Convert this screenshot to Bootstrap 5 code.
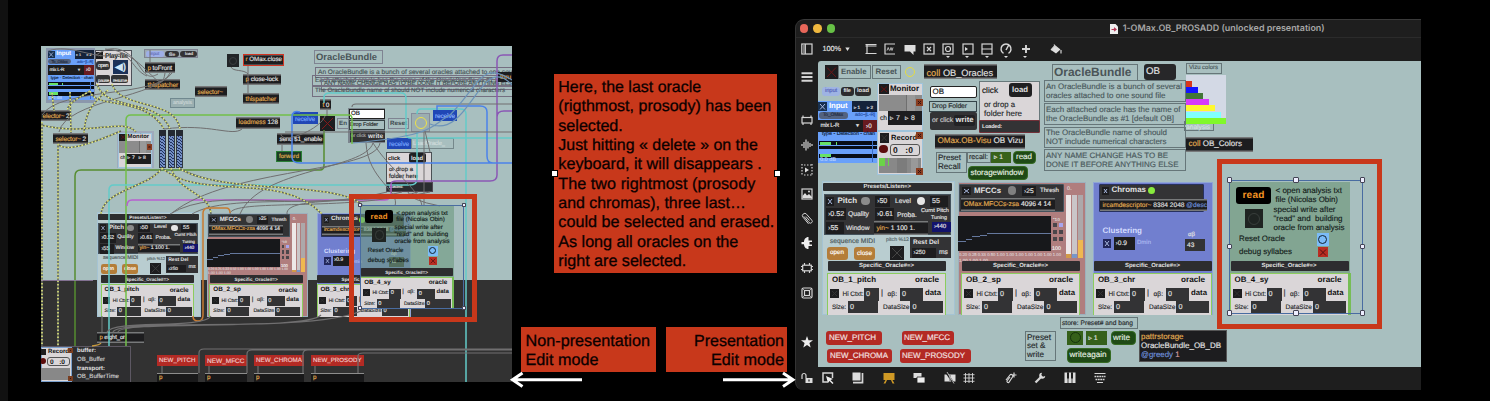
<!DOCTYPE html>
<html lang="en">
<head>
<meta charset="utf-8">
<title>OMax OracleBundle – edit modes</title>
<link href="https://cdn.jsdelivr.net/npm/bootstrap@5.3.0/dist/css/bootstrap.min.css" rel="stylesheet">
<script src="https://cdn.jsdelivr.net/npm/bootstrap@5.3.0/dist/js/bootstrap.bundle.min.js"></script>
<style>
:root{--brick:#c8381b;--patch:#a8bfbf;--chrome:#1e1e1e}
body{background:#000;width:1490px;height:401px;font-family:"Liberation Sans",Arial,sans-serif;line-height:1;text-rendering:geometricPrecision}
.edge{width:8px;height:401px;background:#111}
.patch{position:relative;overflow:hidden;background:var(--patch)}
.patch i{position:absolute;display:block;font-style:normal;box-sizing:border-box}
.patch span{position:absolute;white-space:pre;transform:translateY(-44%);line-height:1.1}
.patch svg{position:absolute;left:0;top:0;overflow:visible}
.patch-left{width:471px;height:336px;margin:46px 0 0 33px;background:linear-gradient(var(--patch) 234.5px,#323232 234.5px)}
.notes{width:283px;height:401px}
.note-main{width:223px;height:199px;background:var(--brick);margin:74px 0 0 42px;padding:4px 0 0 4.3px;position:relative}
.note-line{display:block;white-space:pre;font-size:16.2px;line-height:19.35px;height:19.35px;color:#0b0000;-webkit-text-stroke:.3px #0b0000}
.note-line b{font-weight:400;display:inline-block}
.grip{position:absolute;top:96px;width:7px;height:7px;background:#fff;border:1px solid #000}
.grip.l{left:-3px}.grip.r{right:-4px}
.mode{height:45px;background:var(--brick);padding:4.5px 3px 0 4.5px}
.win{width:626px;height:371px;margin-top:19px;background:var(--chrome);border-top:1.5px solid #3a3a3a;border-left:1px solid #333;border-radius:9px 0 0 8px;overflow:hidden}
.titlebar{height:18px;border-bottom:1px solid #2b2b2b;position:relative}
.dotc{width:8.4px;height:8.4px;border-radius:50%}
.title{color:#a8a8a8;font:600 9.3px Inter,sans-serif;white-space:pre}
.tools{height:22.5px}
.tools svg,.side svg,.foot svg{display:block;flex:none;overflow:visible;fill:none;stroke:#d5d5d5;stroke-width:1.2}
.cell{width:19.3px;display:flex;justify-content:center;position:relative}
.cell.m::after{content:"";position:absolute;top:13px;left:7.4px;border:2.3px solid transparent;border-top:2.8px solid #ddd}
.zoomval{color:#ddd;font-size:8px;margin-left:10px;width:19px;-webkit-text-stroke:.2px #ddd}
.side{width:22px;height:306px;padding-top:4px}
.side div{height:24.6px;display:flex;align-items:center;justify-content:center}
.side .gap-s{height:19px}
.foot{height:23px}
.patch-right{width:603px;height:306px;border-radius:3px 0 0 0}
.frame{position:absolute;border:5px solid var(--brick);pointer-events:none}
.frame-l{left:349px;top:194px;width:128px;height:128px}
.frame-r{left:1217px;top:159px;width:165px;height:170px}
.arrows{position:absolute;left:505px;top:370px}
.modes{margin:54px 0 0 9px;gap:10px}
.mode-a{width:135px}.mode-b{width:121px}
</style>
</head>
<body class="d-flex overflow-hidden position-relative m-0">
<div class="edge flex-shrink-0"></div>
<section id="left" class="patch patch-left flex-shrink-0"></section>

<section class="notes flex-shrink-0 d-flex flex-column">
  <div class="note-main">
    <div class="note-line"><b data-w="142.8">Here, the last oracle</b></div>
    <div class="note-line"><b data-w="213">(rigthmost, prosody) has been</b></div>
    <div class="note-line"><b data-w="64.5">selected.</b></div>
    <div class="note-line"><b data-w="199.5">Just hitting « delete » on the</b></div>
    <div class="note-line"><b data-w="203.5">keyboard, it will disappears .</b></div>
    <div class="note-line"><b data-w="197">The two rightmost (prosody</b></div>
    <div class="note-line"><b data-w="187.5">and chromas), three last…</b></div>
    <div class="note-line"><b data-w="216">could be selected and erased.</b></div>
    <div class="note-line"><b data-w="180">As long all oracles on the</b></div>
    <div class="note-line"><b data-w="128">right are selected.</b></div>
    <div class="grip l"></div><div class="grip r"></div>
  </div>
  <div class="modes d-flex">
    <div class="mode mode-a"><div class="note-line"><b data-w="124.5">Non-presentation</b></div><div class="note-line"><b data-w="73">Edit mode</b></div></div>
    <div class="mode mode-b text-end"><div class="note-line"><b data-w="90">Presentation</b></div><div class="note-line"><b data-w="73">Edit mode</b></div></div>
  </div>
</section>

<section class="win flex-shrink-0">
  <header class="titlebar d-flex align-items-center">
    <div class="d-flex ps-1" style="gap:5px"><div class="dotc" style="background:#e8675a"></div><div class="dotc" style="background:#efb83f"></div><div class="dotc" style="background:#67c146"></div></div>
    <div class="d-flex align-items-center" style="margin-left:275px;gap:4.5px">
      <svg width="8" height="10"><path d="M0 0h5.5l2.5 2.5V10H0z" fill="#eee"/><path d="M1.500 5.500h4.500M4 3.800l2 1.700-2 1.600" stroke="#b33553" stroke-width="1.200" fill="none"/></svg>
      <span class="title"><b class="fw-semibold d-inline-block" data-w="202">1-OMax.OB_PROSADD (unlocked presentation)</b></span>
    </div>
  </header>
  <div class="tools d-flex align-items-center">
    <svg width="12" height="12" style="margin-left:4.5px"><rect x=".8" y="1" width="10.2" height="10" /><path d="M4.3 1v10M2 3h1.5M2 5h1.5M2 7h1.5M2 9h1.5"/></svg>
    <span class="zoomval"><b class="fw-normal d-inline-block" data-w="18.5">100%</b></span>
    <svg width="5" height="4" style="margin-left:3px"><path d="M.3.5h4.4L2.5 4z" fill="#ddd" stroke="none"/></svg>
    <div class="d-flex align-items-center" style="margin-left:12px">
      <div class="cell"><svg width="12" height="12"><path d="M.5 1.5h11M.5 10.5h11M2 1.5v9M.5 3h11"/></svg></div>
      <div class="cell"><svg width="12" height="12"><path d="M11 1H1v10h10"/><path d="M3 7.5l1.2-3 1.2 3M6 7.5l1-3 1 3 1-3" stroke-width=".8"/></svg></div>
      <div class="cell"><svg width="12" height="12"><path d="M.5 2h11v6.500H9.500V12L6 8.500H.5z" fill="#ddd" stroke="none"/></svg></div>
      <div class="cell"><svg width="12" height="12"><rect x="1" y="1" width="10" height="10"/><path d="M4 4l4 4M8 4l-4 4"/></svg></div>
      <div class="cell m"><svg width="12" height="12"><rect x="1" y="1" width="10" height="10"/><circle cx="6" cy="6" r="2.500"/></svg></div>
      <div class="cell m"><svg width="12" height="12"><rect x="1" y="1" width="10" height="10"/><path d="M3 4l3 2-3 2z" fill="#ddd" stroke="none"/></svg></div>
      <div class="cell m"><svg width="12" height="12"><rect x="1" y="1" width="10" height="10"/><path d="M1 6h10"/></svg></div>
      <div class="cell m"><svg width="12" height="12"><path d="M3.500 10.300A5 5 0 1 1 8.500 10.300M6 7l2.500-4.500" stroke-width="1.500"/></svg></div>
      <div class="cell m"><svg width="12" height="12"><path d="M6 2v8M2 6h8" stroke-width="1.900"/></svg></div>
      <div class="cell" style="margin-left:11px"><svg width="12" height="12"><path d="M5.500 2.500L10.500 6.500 6 10.500 1 7z" fill="#ddd" stroke="none"/><path d="M6.500 5L4 1.500M1 7l4-4.500"/><path d="M11 7v3.500"/></svg></div>
    </div>
  </div>
  <div class="d-flex">
    <nav class="side">
      <div><svg width="12" height="12"><path d="M.5 2.200h11M.5 6h11M.5 9.800h11" stroke-width="1.900"/></svg></div>
      <div class="gap-s"></div>
      <div><svg width="12" height="12"><rect x="1" y="3.500" width="10" height="5.500"/><path d="M2 1.500v2M10 1.500v2M2 9v2M10 9v2"/></svg></div>
      <div><svg width="12" height="12"><path d="M1 5v2M3 3v6M5 .5v11M7 2.500v7M9 4v4M11 5v2"/></svg></div>
      <div><svg width="12" height="12"><path d="M1 0v12M11 0v12" stroke-dasharray="1.500 1.500"/><path d="M3 1h8M3 11h8" stroke-dasharray="1.500 1.500"/><path d="M4 3.500L8 6l-4 2.500z" fill="#ddd" stroke="none"/></svg></div>
      <div><svg width="12" height="12"><rect x="1" y="1" width="10" height="10"/><path d="M1.500 10V8l2.500-3 2 2.500L8 6l3 3v1z" fill="#ddd" stroke="none"/><circle cx="8" cy="3.500" r="1" fill="#ddd" stroke="none"/></svg></div>
      <div><svg width="12" height="12"><path d="M3 3.500l5 6a1.800 1.800 0 0 0 2.800-2.300L5.500 1.200A2.300 2.300 0 0 0 2 4.200l5.500 6.600M5 3.500l3.500 4" stroke-width="1"/></svg></div>
      <div><svg width="12" height="12"><path d="M7.500 0v3.500H11v1.500H8.500v2.500H11V9H7.500v3C4.500 12 3 9.500 3 7.200H.5V5H3C3 2.500 4.500 0 7.500 0z" fill="#eee" stroke="none"/></svg></div>
      <div><svg width="12" height="12"><rect x="1.700" y="3.200" width="8.600" height="5.600"/><path d="M3.500 1v2M8.500 1v2M3.500 9v2M8.500 9v2M0 4.500h2M0 7.500h2M10 4.500h2M10 7.500h2"/></svg></div>
      <div><svg width="12" height="12"><rect x="1" y="1" width="10" height="10" rx="1.500"/><rect x="3.500" y="3.500" width="5" height="5"/><path d="M1 1l2.500 2.500M11 1L8.500 3.500M1 11l2.500-2.500M11 11L8.500 8.500" stroke-width=".7"/></svg></div>
      <div></div>
      <div><svg width="12" height="12"><path d="M6 0l1.500 4.200H12L8.400 7l1.300 4.500L6 8.900l-3.700 2.600L3.600 7 0 4.200h4.500z" fill="#eee" stroke="none"/></svg></div>
    </nav>
    <div id="right" class="patch patch-right"></div>
  </div>
  <footer class="foot d-flex align-items-center">
    <svg width="12" height="12" style="margin-left:4.500px"><path d="M1 7V3.500a2 2 0 0 1 4 0V6"/><rect x="4.500" y="6" width="7" height="5" fill="#ddd" stroke="none"/><path d="M8 7.500v2" stroke="#1e1e1e"/></svg>
    <svg width="12" height="12" style="margin-left:9px"><path d="M6 10H1V1h9.500v5" stroke-width="1.500"/><path d="M4 4l7 3-2.500 1 3 3-1 1-3-3L6 11z" fill="#eee" stroke="none"/></svg>
    <svg width="12" height="12" style="margin-left:18px"><path d="M.5.5h8v8h-8z" fill="#ddd" stroke="none"/><path d="M10.500 1v9.700H1" stroke-width="1.700"/></svg>
    <svg width="12" height="12" style="margin-left:19px"><path d="M.5 1h11v7h-2l2 3.500H9.500L8 8H4l-1.500 3.500h-2L2.500 8h-2z" fill="#cf9925" stroke="none"/></svg>
    <svg width="12" height="12" style="margin-left:18.500px"><path d="M.5 1h8v5h-8z" fill="#ddd" stroke="none"/><path d="M4 5h8v6H4z" fill="#eee" stroke="#1e1e1e" stroke-width=".8"/></svg>
    <svg width="12" height="12" style="margin-left:18.500px"><path d="M.5 2.500h5v7h-5zM6.500 2.500h5v7h-5z" fill="#ddd" stroke="none"/><path d="M2 0l8 12" stroke="#1e1e1e" stroke-width="2"/><path d="M3 0l7 11.500M6 2v8" stroke-width=".8"/></svg>
    <svg width="12" height="12" style="margin-left:7.500px"><path d="M2.500 1v10M6 1v10M9.500 1v10M.5 2.700h11M.5 6h11M.5 9.300h11" stroke-width=".9"/></svg>
    <svg width="12" height="12" style="margin-left:29.500px"><path d="M1 8l4-5a1.500 1.500 0 0 1 2.500 2L3.800 10.500A1.300 1.300 0 0 1 2 9l3-4M9 .5v5M6.500 3h5"/></svg>
    <svg width="12" height="12" style="margin-left:17px"><path d="M1.500 10.500l5-5" stroke-width="2.300"/><path d="M8 .8A3 3 0 1 0 11.200 4L9 4.700 7.300 3z" fill="#ddd" stroke="none"/></svg>
    <svg width="12" height="12" style="margin-left:18px"><path d="M.5.5h11v10.500H.5z" fill="#ddd" stroke="none"/><path d="M4 0v11M8 0v11" stroke="#1e1e1e" stroke-width=".8"/><path d="M4 .5v6M8 .5v6" stroke="#1e1e1e" stroke-width="2"/></svg>
    <svg width="12" height="12" style="margin-left:18.500px"><path d="M.5 1.500h11M3 10.500h6"/><path d="M.5 4.500h11M1.500 7.500h9" stroke-width="1.700" stroke-dasharray="1.800 .6"/></svg>
  </footer>
</section>

<div class="frame frame-l"></div>
<div class="frame frame-r"></div>
<svg class="arrows" width="300" height="22" fill="none" stroke="#fff" stroke-width="3"><path d="M8 9.700h69M17.500 3L7.500 9.700l10 6.800M218 9.700h70M278 3l10 6.700-10 6.800"/></svg>

<script>
const D='#1d1d1f', G='#333335', P='#dad6d8', O='#e3ad52', W='#e2e2e2', K='#26292b';
// Fits a label to a width: shrink the type first, then adjust the tracking.
function fit(el,w){const n=el.textContent.length;let m=el.getBoundingClientRect().width;
  const f=parseFloat(getComputedStyle(el).fontSize),s=Math.max(.92,Math.min(1.06,w/m));
  if(Math.abs(s-1)>.005){el.style.fontSize=f*s+'px';m=el.getBoundingClientRect().width}
  el.style.letterSpacing=((w-m)/n)+'px'}

// A patcher draws boxes, labels and cables in its own coordinate space.
function patcher(id,x0,y0){
  const root=document.getElementById(id);let k=1,tx=0,ty=0;
  const px=v=>v+'px';
  const p={
    at(s,fx,fy,gx,gy){k=s;tx=gx-s*fx;ty=gy-s*fy},
    // box given by its left, top, right, bottom
    b(x,y,r,q,bg,bd,rad){const e=document.createElement('i');Object.assign(e.style,{left:px(k*x+tx-x0),top:px(k*y+ty-y0),width:px(k*(r-x)),height:px(k*(q-y)),background:bg||'transparent',border:bd||'',borderRadius:px(k*(rad||0))});root.append(e);return e},
    // label from x to r, centred on y
    t(x,r,y,s,str,c,bold){const e=document.createElement('span');if(Array.isArray(str))str.forEach(([a,col])=>{const q=document.createElement('em');q.style.fontStyle='normal';q.style.color=col;q.textContent=a;e.append(q)});else e.textContent=str;
      Object.assign(e.style,{left:px(k*x+tx-x0),top:px(k*y+ty-y0),fontSize:px(k*s),color:c||K,fontWeight:bold?700:400,webkitTextStroke:bold?'':'.15px'});root.append(e);fit(e,k*(r-x));return e},
    c(x,y,r,bg,bd){p.b(x-r,y-r,x+r,y+r,bg,bd,r)},
    x(x,y,r,q,bg,col){const s=document.createElementNS('http://www.w3.org/2000/svg','svg');p.b(x,y,r,q,bg||D);s.innerHTML=`<path d="M${k*x+tx-x0+2*k} ${k*y+ty-y0+2*k}L${k*r+tx-x0-2*k} ${k*q+ty-y0-2*k}M${k*r+tx-x0-2*k} ${k*y+ty-y0+2*k}L${k*x+tx-x0+2*k} ${k*q+ty-y0-2*k}" stroke="${col||'#a9b9e0'}" stroke-width="${k}"/>`;root.append(s)},
    w(list){const s=document.createElementNS('http://www.w3.org/2000/svg','svg');s.innerHTML=`<g transform="translate(${-x0} ${-y0})" fill="none">`+list.map(([c,sw,d,da])=>`<path d="${d}" stroke="${c}" stroke-width="${sw}"${da?` stroke-dasharray="${da}"`:''}/>`).join('')+'</g>';root.append(s)},
    obj(x,y,r,q,tr,s,str){p.b(x,y,r,q,D,'').style.boxShadow='inset 0 1.5px #77797a, inset 0 -1.5px #77797a';p.t(x+2.5,tr,(y+q)/2,s,str,W)},
    num(x,y,r,q,str,s,bg,c){p.b(x,y,r,q,bg||D);p.t(x+2,Math.min(r-1,x+2+[...str].reduce((a,ch)=>a+(ch==='›'?.36:ch==='.'?.28:.56),0)*(s||7)),(y+q)/2,s||7,str,c||W)},
    foot(dx,name,nr){const X=v=>v+dx;
      p.b(X(828),261.5,X(946),271.500,'#2d2d2f','',1);p.t(X(859),X(914),266.500,6,'Specific_Oracle#=>',W,1);
      const e=p.b(X(827),273,X(946),315,P,'1px solid #8ccc5e');e.style.borderBottom='0';
      p.t(X(832),X(nr),280.500,8.600,name,'#111',1);p.t(X(915),X(939),280.500,8.300,'oracle','#111',1);
      p.x(X(830),289,X(839),298,D,'#333');p.t(X(842.5),X(863.5),294,7,'Hi Ctxt:');p.b(X(864),288,X(879),301,G);p.t(X(866),X(870),294,7,'0',W);
      p.t(X(881),X(883),293,7.500,'|');p.t(X(887.5),X(897),294,7,'αβ:');p.b(X(900),288,X(923),301,G);p.t(X(902),X(906),294.500,7,'0',W);p.t(X(925),X(941),293,8.300,'data','#111',1);
      p.t(X(832),X(846),307.500,7,'Size:');p.b(X(848),301.500,X(878),313.500,G);p.t(X(850),X(854),307.500,7,'0',W);p.t(X(883),X(909.5),307.500,7,'DataSize');p.b(X(910),301.500,X(943),313.500,G);p.t(X(912.5),X(916.5),307.500,7,'0',W)},
    pitch(){p.b(822,181,955,315,'#b9cdd0','1px solid #a5c3d3');p.b(823,183,952,191.500,'#2d2d2f','',1);p.t(863.5,911,187.500,6.200,'Presets/Listen=>',W,1);
      p.b(824,194.500,951,235,G,'1px solid #44525c');p.x(826,197,834,206,D);p.t(837.5,857,201.500,8.500,'Pitch',W,1);p.c(865.5,201.500,4.300,'#8b8b8b');
      p.num(875,196,890,207,'›50',7);p.t(895,911,201.500,7.200,'Level',W);p.c(921,201.500,4.300,'#e6e6e6');p.num(930,196,948,207,'55',7);
      p.num(826,208,846,220,'›0.52',7);p.t(848,869,214.500,7.200,'Quality',W);p.num(875,208,894,220,'›0.61',7);p.t(897,917,215,7.200,'Proba.',W);p.t(921,949,211,5.300,'Curnt Pitch',W);p.t(931,947,219,5.500,'Tuning',W);
      p.num(826,222,844,234,'›55',7);p.t(846,869.5,228,7.200,'Window',W);p.obj(874,221.500,928,235,915,7.200,[['yin~ ',O],['1 100 1.',W]]);p.num(932,222,951,232.500,'›440',6,'#12136c');
      p.t(830,875,241,6.800,'sequence MIDI','#4a5557');p.t(886,909,241,5.500,'pitch %12','#56666a');p.b(910,237,951,258.500,G);p.t(913,939,242.500,6.800,'Rest Del',W,1);p.num(911.5,248,936,258,'›250',5.800);p.t(939,948,252,6.500,'ms',W);
      p.b(827,247,847.5,260,'#b47d39','',3);p.t(830,844,253.500,6.500,'open','#fff');p.b(854,247,875,260,'#b47d39','',3);p.t(857,872,253.500,6.500,'close','#fff');p.x(890,246,904,260,D,'#444');p.foot(0,'OB_1_pitch',876)},
    mfcc(){p.b(957.5,182,1086,315,'#b07e7e','1px solid #9db0bd');p.b(959,184,1064,212.500,G,'1px solid #44525c',1);p.x(962,187,971,195,D);p.t(974,1001,191.500,8.300,'MFCCs',W,1);p.c(1012,191,4.300,'#808080');p.num(1022,186,1036,196.500,'›25',6.500);p.t(1040,1059,191.500,6.300,'Thresh',W);
      p.obj(961,198,1055,211,1051,7,[['OMax.MFCCs-zsa ',O],['4096 4 14',W]]);p.b(958,216,1051,251.500,'#17181b');
      [[958,966,241],[966,972,239],[972,980,236.500],[980,987,235],[987,1051,233.500]].forEach(a=>p.b(a[0],a[2],a[1],a[2]+.8,'#65789e'));
      p.t(959,1061,255,4.400,'0.20 0.25 0.33 0.50 1.00 1.00 1.00 1.00 1.00 1.00 1.00','#dacbcc');p.t(959,988,260,4.400,'1.00 1.00 1.00','#dacbcc');
      for(let i=0;i<3;i++){p.b(1053,223+i*7,1056.5,227+i*7,'#4b464a');p.b(1058.5,223+i*7,1062.5,227+i*7,i?'#4b464a':'#a9a5ee')}
      p.t(1053,1060,220,4,'"10','#ddd');p.t(1052,1061,250,5,'100','#eee');p.t(1067,1072,190,5,'0.','#ddd');
      p.b(1066,195,1071,258,'#eee8e8');p.b(1072,195,1077,258,'#cac6c8');p.b(1078,195,1083,258,'#ada8aa');p.b(1078,240,1083,258,'#efb850');p.b(1066,254.500,1071,258,'#d29a48');p.b(1072,254.500,1077,258,'#7896c9');p.foot(134,'OB_2_sp',867)},
    chroma(){p.b(1093,182.500,1213,315,'#717fcf','1px solid #8fa5d6');p.b(1099,184,1204,212.500,G,'1px solid #27315f',1);p.x(1102,187,1109,195,D);p.t(1111.5,1146,190.500,8,'Chromas',W,1);p.c(1151.5,191,3.800,'#87ea3d');
      p.obj(1100,199,1207,211,1207,6.800,[['ircamdescriptor~ ',O],['8384 2048 ',W],['@desc','#6f91dd']]);p.t(1102.5,1142,231.500,8,'Clustering','#d5dcff',1);p.x(1103,239,1111,248,'#22275a');p.num(1113.5,237,1135,250,'›0.9',6.500);p.t(1137,1151,243.500,6.500,'Dmin','#acb9f0');p.t(1188,1195,235,6.500,'αβ',W);p.num(1185,239,1205,251,'43',6.500,G);p.foot(266,'OB_3_chr',869)},
    prosody(alpha){p.b(1230,182,1350,315,alpha?'rgba(108,153,126,.6)':'#82a592','');p.b(1236,187,1271,204,'#000','',3);p.t(1242.5,1264.5,195.500,9.500,'read','#f29323',1);
      [['< open analysis txt',1275.5,1342,191.500],['file (Nicolas Obin)',1275.5,1338,200],['special write after',1273.5,1335.5,210],['"read" and  building',1273.5,1342.5,219],['oracle from analysis',1273.5,1344.5,228]].forEach(a=>p.t(a[1],a[2],a[3],7.700,a[0],'#14201a'));
      p.b(1244.5,209.500,1263,228.500,'#1f2422');p.c(1254,219,6,'','1px solid #383e3b');p.t(1239,1285,239.500,7.700,'Reset Oracle','#14201a');p.t(1239,1292,252.500,7.700,'debug syllabes','#14201a');
      p.b(1316.5,233,1329,246,'#7bbcf8');p.c(1322.8,239.500,4.500,'','1px solid #123');p.x(1318,247.500,1328,257.500,'#b92d22','#511');p.foot(402.5,'OB_4_sy',866);p.b(1348,273,1350.500,315,'#76bd55');
      p.b(1229,180.500,1363,314,'','1.3px solid #496ca1');[1229.5,1296,1362.5].forEach(x=>[180.500,247,313.500].forEach(y=>{if((x!==1296||y!==247)&&!(alpha&&(x===1296||y===247)))p.b(x-2.700,y-2.700,x+2.700,y+2.700,'#eef','1px solid #445',1)}))}
  };return p}

const bdr='1px solid #667679';
document.querySelectorAll('[data-w]').forEach(e=>fit(e,+e.dataset.w));

// presentation view
const r=patcher('right',818,61);
function monitor(p){p.b(877,83,923,131,P,'1px solid #9fc4dc');p.x(879,84.500,889,94,D,'#611');p.t(890,919,89.500,8.300,'Monitor','#111',1);p.b(879,95,922,111,'#8c8c8c');p.b(907,95,915,111,'#999');p.b(906,95,907,111,'#6f6f6f');p.x(916,99,923,106,'#8a3d20','#311');p.t(880,887,118,7.300,'ch');p.b(887.5,111.500,921.5,125,D);p.t(890,900,118,6.500,'▹ 7',W);p.t(905,915,118,6.500,'▹ 8',W)}
function record(p){p.b(877,131.500,923,175,P,'1px solid #9fc4dc');p.x(879.5,133,889,143,D,'#333');p.t(891,917,138,8.200,'Record','#111',1);p.c(883.5,149.500,4.300,'#5c0d0d');p.b(889.5,144,920,156,P,'1px solid #555',3);p.t(893,913,150,8,'0   :0','#111',1);p.b(879,158,921,173,'#888');p.b(897,158,907,173,'#7c7c7c');p.b(911,158,918,173,'#999');p.b(879,158,885,166,'#6bd348');p.b(888,158,889,166,'#6bd348');p.x(916,132,923,139,'#8a3d20','#311');p.x(916,168,923,175,'#8a3d20','#311')}
function input(p){p.b(818,101,876.5,163,'#69a0fa');p.x(818,102,827,111.500,'#17304f');p.t(829,847.5,106.500,8.500,'Input','#fff',1);p.b(852,101.500,876.500,112,'#15233a');p.t(854,860,107,5,'▹ 1',W);p.t(867,873,107,5,'▹ 2',W);p.b(818.5,112.500,848,119,'#53627f','',3);p.t(823,843,115.700,5.300,'To_OMax','#1d293f');p.t(855,875,115.500,5.300,'adc~[L-R]','#22499e');p.b(818,120,863,132,D);p.t(820.5,839,126.500,6.500,'mix L-R',W);p.t(855,860,126,5,'▼',W);p.b(863,120,876.500,132,'#681b20');p.t(866,872,126,6,'›0',W);p.t(822,875,135.500,5.700,'type - Detection - chan','#0b1b38');p.b(818.5,141,876.500,149.500,'#080e18');p.b(818.5,145,876.500,146,'#69a0fa');p.b(819.5,142,831,145,'#67e265');p.b(835.5,142,836.500,145,'#67e265');p.b(818.5,154,876.500,158,'#080e18');p.b(819.5,154,831,157.500,'#67e265');p.b(871.5,141,872.5,162,'#3d6fc4');p.t(820,836,160.500,5.500,'0.0 dB','#b7d1ff')}
r.x(825,65.500,838,79,D,'#6d1717');r.b(838,65.500,870.5,79,'',bdr);r.t(841,866.5,72.300,8.400,'Enable','#4a5659',1);r.b(872,65.500,900.5,79,'',bdr);r.t(875.5,897,72.300,8.400,'Reset','#4a5659',1);r.c(909.5,72,5,'','1.5px solid #e6dc3f');
r.obj(924,64.500,997,79.500,993,9.100,[['coll ',O],['OB_Oracles',W]]);
r.b(822,87,840,96,'#9eb3e3','',3);r.t(825,837,91.500,6.300,'input','#5562ba');r.b(841,87,853.500,96,'#2c2c2e','',3);r.t(843.5,850.500,91.500,6,'file',W,1);r.b(855,87,871,96,'#2c2c2e','',3);r.t(857,869,91.500,6,'load',W,1);
input(r);monitor(r);record(r);
r.b(930,86.500,977,98.500,'#fff','1px solid #222',2);r.t(932.5,944,92.800,8.300,'OB','#111');r.b(929,101,977,112,'#a8bfbf','1px solid #354449');r.t(932,967,106.800,7.300,'Drop Folder');r.b(930,112,976.500,130,G,'',2);r.t(932,953,120.500,7,'or click','#ccc');r.b(954,115,975,126,'#222224','',2);r.t(955.5,973.500,120.500,7.800,'write',W,1);
r.b(979,81,1039.5,121,P,'1px solid #68787b');r.t(982,998,90,8,'click','#111');r.b(1009,83,1032,97.500,'#202022','',3);r.t(1012,1028,90.500,8,'load',W,1);r.t(984,1015,105,8,'or drop a');r.t(984,1022,114,8,'folder here');r.b(979,120.500,1040,133,G,'1px solid #713038',1);r.t(982,1002,127,6,'Loaded:',W,1);
r.obj(935,134,1025,149,1023,8.100,[['OMax.OB-Visu ',O],['OB Vizu',W]]);
r.b(935.5,152,967,173.500,'',bdr);r.t(938,961,158.500,8,'Preset');r.t(938,960.5,167.500,8,'Recall');r.b(967,152,991,163.500,'',bdr);r.t(969,988,157.800,7,'recall:');r.b(991,152,1010.5,163.500,'#38621a');r.t(994,1003,157.800,7,'▹ 1',W);
const gb=(x,y,q,z,s,a,c)=>{r.b(x,y,q,z,'#1f4a16','1px solid #356b22',4);r.t(a,c,(y+z)/2,8.100,s,'#e4efe0')};
gb(1013,151,1035.5,164.500,'read',1016,1032);gb(968,166,1028,180,'storagewindow',970.5,1023.5);
r.b(1051.5,64,1138,81.500,'',bdr);r.t(1054,1131.500,72.700,12.100,'OracleBundle','#4b5558',1);r.b(1143.5,64,1176,80,'#272729','',3);r.t(1146,1160,72,9.200,'OB',W);
r.b(1184,121,1213.5,131.500,'',bdr);r.t(1186,1210,127,7,'analysis','#d6e1e1');r.b(1186,75.500,1226,124,'#d3d9e5');
[[80.500,102,'An OracleBundle is a bunch of several',1182,'oracles attached to one sound file',1165.5],[103.500,125.500,'Each attached oracle has the name of',1180.5,'the OracleBundle as #1 [default OB]',1174],[127,148.500,'The OracleBundle name of should',1167,'NOT include numerical characters',1166.5],[149.500,171.500,'ANY NAME CHANGE HAS TO BE',1168,'DONE IT BEFORE ANYTHING ELSE',1178.5]].forEach(a=>{r.b(1043.5,a[0],1185.5,a[1],'',bdr);r.t(1046,a[3],a[0]+6.500,8.300,a[2],'#49585b');r.t(1046,a[5],a[0]+15.500,8.300,a[4],'#49585b')});
r.b(1186,63,1221.5,74,'',bdr);r.t(1189,1218,68.500,6.400,'Vizu colors','#49585b');
['#d9371c','#1414ff','#427636','#d63bfb','#fff82f','#80ffff','#80f82a'].forEach((c,i)=>r.b(1186,81.500+i*6.100,1192+i*5.700,87.600+i*6.100,c));
r.obj(1186,137.500,1253,152,1242,7.800,[['coll ',O],['OB_Colors',W]]);
r.pitch();r.mfcc();r.chroma();r.prosody();
[[826,331,881.5,'NEW_PITCH',829,876],[901.5,331,953.5,'NEW_MFCC',904,950],[827,349,891.5,'NEW_CHROMA',830,888],[899.5,349,971,'NEW_PROSODY',902,965]].forEach(a=>{r.b(a[0],a[1],a[2],a[1]+14.500,'#b32a24','',3);r.t(a[4],a[5],a[1]+7.300,8.400,a[3],'#f3e3e3')});
r.b(1025,331,1055.5,361.500,'',bdr);r.t(1027,1051,337.500,8.200,'Preset');r.t(1027,1045.500,346.500,8.200,'set &');r.t(1027,1044,355.500,8.200,'write');
r.b(1059.5,317.500,1137.5,329,'',bdr);r.t(1062,1133,323.500,7,'store: Preset# and bang');
r.b(1067,331,1083,345.500,'#35601a');r.c(1075.3,338.300,5.500,'','1.3px solid #15330d');r.b(1086,331,1106.5,345.500,'#35601a');r.t(1088.5,1097.5,338,7.500,'▹ 1',W);gb(1110.5,331,1136,345,'write',1113,1130);gb(1067,348.500,1110.5,363,'writeagain',1069.5,1106.500);
r.b(1138.5,330.500,1226.5,362.500,D,'1px solid #555');r.t(1141,1183.500,337.500,8.300,'pattrstorage',O);r.t(1141,1221,346.500,8.300,'OracleBundle_OB_DB',W);r.t(1141,1179.500,355.500,8.300,[['@greedy ','#6f91dd'],['1','#d8a0a0']]);

// patching view
const l=patcher('left',41,46);
const pale='1px solid #7f8492';
l.at(.8,818,101,47.5,50);l.b(816,99,878,167,'#8b97ac');input(l);l.at(1,0,0,0,0);
l.b(95,50,132,86,P,'1.5px solid #4c5058');l.x(96,52,103,59,D,'#333');l.t(105,128,56,7.400,'Play-file','#222',1);l.b(96,61,110,70,G,'',3);l.t(98,108,65.500,6,'open',W);l.b(113,60,128,74,'#1c3158');l.t(115,126,67,10,'◀)','#cfe5f7',1);l.b(96,75,110,83,G,'',2);l.t(98,109,79.500,5,'pause',W);l.b(111,75,128,83,G,'',2);l.t(113,127,79.500,5,'resume',W);
l.b(144,49,198,58,'#9daab3',pale);l.b(146,50.500,164,57,'#9eafe7','',2);l.t(150,159,54,4.800,'input','#6570bb');l.b(165,50.500,179,57,G,'',3);l.t(169,175,54,4.500,'file',W);l.b(180,50.500,197,57,G,'',3);l.t(185,193,54,4.500,'load',W);
l.obj(145,62,175,73,172,7,[['p ',O],['toFront',W]]);l.obj(145,79,180,90,178,7,[['thispatcher',O]]);l.obj(195,86,227,97,223,7,[['selector~',O]]);l.b(170,97.500,195,108,'#9aafb1','1px solid #70888f');l.t(173,192,102.800,6,'analysis','#c9d4d5');
l.b(227,54,239,67,'#212427');l.c(233,60.500,4,'','1px solid #393d3f');l.obj(243,54,284,66,282,6.800,[['r ',O],['OMax.close',W]]);l.b(243,54,284,66,'','1.3px solid #d23522');l.obj(243,74,281,85,278,6.800,[['p ',O],['close-lock',W]]);l.obj(243,93,279,104,276,7,[['thispatcher',O]]);l.obj(236,117,280,128.500,278,6.800,[['loadmess ',O],['128',W]]);
l.b(313.500,49.500,383,64,'',pale);l.t(316,377,57,10,'OracleBundle','#4a5558',1);
[[315,67,'An OracleBundle is a bunch of several oracles attached to one sound file',530],[312,75,'Each attached oracle has the name of the OracleBundle as #1 [default OB]',529],[321,79,'ANY NAME CHANGE HAS TO BE DONE IT BEFORE ANYTHING ELSE',516],[312,86,'The OracleBundle name of should NOT include numerical characters',505]].forEach(a=>{l.b(a[0],a[1],520,a[1]+10.500,'','1px solid #746f80');l.t(a[0]+3,a[3],a[1]+5.300,6.700,a[2],'#475357')});
l.b(498,72,513,82,'#1c1d20');l.t(500,511,77,6,'thru',O);
l.obj(40,110,71,121,69.5,7,[['elector~ ',O],['2',W]]);l.obj(53,133,88,144,86,7,[['selector~ ',O],['2',W]]);
l.at(.74,877,83,118,132.500);l.b(875,81,925,131,'#9faabb');monitor(l);l.at(1,0,0,0,0);
[159,168,176].forEach(x=>{const e=l.b(x,130,x+7,168,'#738ec5','1px solid #333943');e.style.backgroundImage='repeating-linear-gradient(35deg,transparent 0 1.6px,#20325d 1.6px 2.4px)';l.b(x,130,x+7,136,'#242931')});
l.obj(320,99,331,110,329,7,[['t ',O],['0',W]]);l.b(293,112,318,124,'#2047b5');l.t(295,315,118.500,7,'receive','#79a8ff');l.x(320,116,335,131,D,'#831919');l.b(337,118,353,129,'',pale);l.t(339,347,123.500,6.500,'En','#3f4b50',1);
l.b(348,108,385,143,'#7c858e');l.b(349,109,385,118.500,'#fff','1px solid #222');l.t(351,360,114,6.500,'OB','#111');l.b(349,120,385,130,'#a8bfbf','1px solid #384446');l.t(350,378,125,6,'Drop Folder');l.b(350,131,385,142,G);l.t(351,366,135.500,5.300,'or click','#aaa');l.t(368,383,135.500,6.500,'write',W,1);
l.b(388,118,409,129,'',pale);l.t(390,407,123.500,6.800,'Reset','#3f4b50',1);l.b(411,113,430,132,'#9caeb0','1px solid #858c9b');l.c(421,123,6.300,'','1.6px solid #eee248');l.b(433,110,457,121,'#2047b5');l.t(435,455,116,7,'receive','#8db5ff');l.b(387,138,411,149,'#2047b5');l.t(389,409,143.500,7,'receive','#79a8ff');l.b(411,138,454,149,'','1px solid #75888b');l.t(413,445,144,6.500,'LoadOracle_','#d0dddd');
l.obj(277,133,324,144.500,322,7,[['send ',W],['$1_enable',W]]);l.b(276,151,302,161.500,'#1b3b24','1px solid #297e35');l.t(279,299,156.500,6.500,'forward',O);
l.b(386,152,432,183,P,'1px solid #4a5054');l.t(388,400,158.500,6,'click','#111',1);l.b(409,153,426,163,'#202022','',2);l.t(411,423,158.500,6.300,'load',W,1);l.t(389,413,169.500,6.500,'or drop a');l.t(389,418,176.500,6.300,'folder here');l.b(386,182,433,192,'#2b2d30','1px solid #514954');l.t(389,403,187,4.500,'Loaded:',W);
l.at(.785,823,183,97.5,213.500);l.pitch();l.at(.785,957,183,206.3,213.500);l.mfcc();l.at(.785,1093,183,316.5,213.500);l.chroma();l.at(1,0,0,0,0);
l.obj(97,332,144,343,125,6.500,[['p ',O],['eight_or',W]]);
l.b(41,346,131,383,'#2e2e30','1px solid #5d5863');l.b(41,347,72,382,P,'1px solid #7ba0cc');l.t(48,69,352,6.500,'Record','#111',1);l.b(41,349,46,355,D);l.c(43,361,3,'#5c0d0d');l.b(47,357,70,366,P,'1px solid #555',3);l.t(50,65,361.500,6.500,'0   :0','#111',1);l.b(41,368,70,380,'#888');l.x(68,348,73,353,'#783d20','#311');l.x(68,376,73,381,'#783d20','#311');
l.t(77,96,351,6.500,'buffer:',W,1);l.t(77,105,359.500,6.500,'OB_Buffer','#ccc');l.t(77,105,369,6.500,'transport:',W,1);l.t(77,119,377,6.500,'OB_BufferTime','#ccc');
[[157,'NEW_PITCH',197.500],[205,'NEW_MFCC',246.500],[254,'NEW_CHROMA',304],[311,'NEW_PROSODY',363.5]].forEach(a=>{l.b(a[0],355,a[2],366,'#b32a24');l.t(a[0]+2,a[2]-2,360.500,6.700,a[1],'#efcaca');l.b(a[0],373,a[2],383,'#19191a');l.b(a[0],372.500,a[2],374,'#8d8d8d');l.t(a[0]+2,a[0]+5.500,377.500,6.500,'p',O)});
const g='#706f70',y='#e6ec7d',db='#60665a';
const dash=d=>[[db,1.5,d],[y,1.5,d,'1.6 1.9']];
l.w([
 ['#568d30',1.5,'M75 346V176Q75 170 81 170H320Q324 170 324 165V130'],['#72c04a',1.500,'M126 346V120Q126 115 131 115H349Q352 115 352 119V144'],['#63cbc9',1.500,'M109 346V190Q109 185 114 185H410Q417 185 417 179V132M324 103V97Q324 93 330 93H401Q406 93 406 98V134Q406 138 411 138H513M417 114Q417 109 421 109H460Q466 109 466 114V382'],
 ['#b660d0',1.500,'M127 206Q127 200 132 200H385Q391 200 391 191V184'],['#8a58b5',1.500,'M391 184Q391 181 397 181H490Q497 181 497 175V61Q497 55 503 55H512M497 117Q497 111 504 111H513'],['#4b83ea',1.500,'M300 112Q292 110 292 117V157Q292 163 300 163H512M437 110V106H480Q487 106 487 112V156Q487 163 493 163'],
 [g,1.1,'M352 107Q352 104 356 104H512M285 132H512'],['#6c93b9',1.2,'M353 143C440 135 430 125 450 115C480 85 480 60 512 80M430 124C470 140 480 50 512 85'],
 [g,1,'M48 51C70 43 95 60 113 55S132 70 147 76M96 55C118 40 132 55 140 67S152 77 158 74M150 50V62M172 73C155 98 60 87 42 115M170 73C160 97 66 100 59 132M165 73C161 102 145 50 105 49M231 67C233 72 244 69 248 74M248 66V93M164 129C210 123 232 137 242 129M281 134C281 145 320 130 325 116M327 110V116M373 143C365 170 260 168 240 214M380 143C375 173 230 167 172 213M366 143C368 180 400 190 395 206M373 143C390 170 420 190 422 206M387 192C300 215 220 184 170 214M402 192C330 210 230 192 192 214M418 192C350 212 230 198 230 214M430 192C370 205 285 195 287 214M424 132V206M425 131L430 152M408 192Q409 200 440 206M282 145V151'],
 ...dash('M52 93L54 111'),...dash('M70 92L71 133'),...dash('M90 91Q65 105 68 110'),...dash('M41 125C90 137 123 117 136 132'),...dash('M58 144C66 154 100 140 121 131'),...dash('M90 91C95 110 145 95 164 129'),...dash('M97 84C105 112 158 97 170 129'),...dash('M112 84C120 110 175 98 180 129'),...dash('M108 90C90 105 85 115 84 133'),...dash('M58 144V346'),...dash('M42 122V346'),...dash('M162 168C150 187 103 190 101 214'),...dash('M162 168C200 202 280 170 322 214'),...dash('M171 168C180 194 209 192 211 214'),...dash('M179 168C220 195 340 180 363 206'),
 ['#c87b32',1.5,'M193 316Q193 321 198 321Q203 321 203 315V213Q203 208 209 208H226Q230 208 230 213'],[g,1.2,'M102 316V332M107 332C113 319 202 330 211 316M113 332C119 318 304 332 321 315M118 332C120 319 330 333 364 309M199 373V353Q199 349 204 349H512M247 373V354Q247 350 252 350H512M303 373V354Q303 350 308 350H512M358 373V356Q358 353 363 353H512M162 366V373M209 366V373M258 366V373M315 366V373'],['#9781aa',.8,'M41 280.500H93'],['#c99b3d',1.300,'M101 343Q100 345 92 346']
]);
l.at(.777,1229,180.500,360,205);l.prosody(true);
</script>
</body>
</html>
